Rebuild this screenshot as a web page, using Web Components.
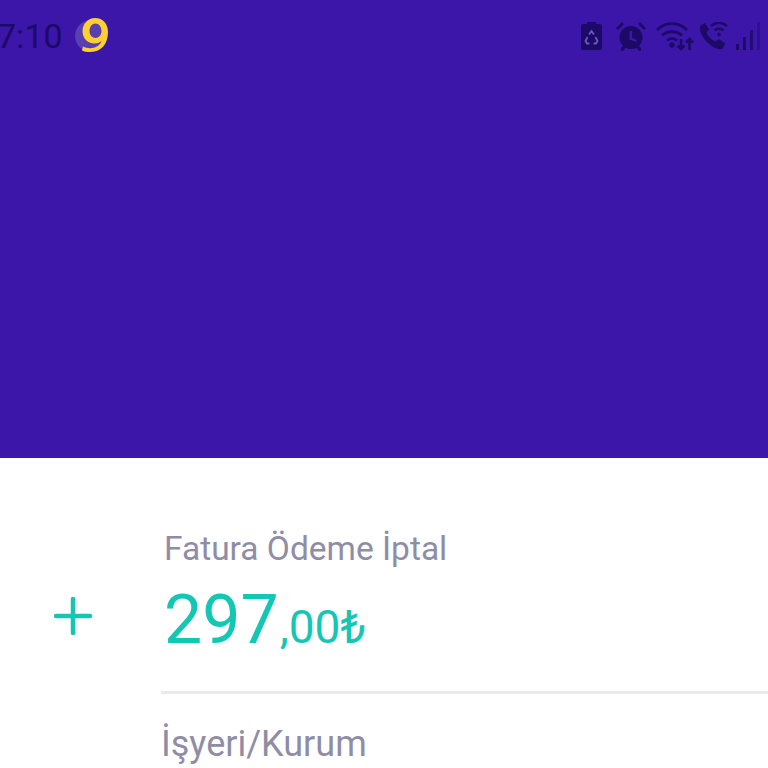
<!DOCTYPE html>
<html lang="tr">
<head>
<meta charset="utf-8">
<title>Fatura Ödeme İptal</title>
<style>
html, body { margin: 0; height: 768px; overflow: hidden; background: #fff; font-family: Roboto, "Liberation Sans", sans-serif; }
</style>
</head>
<body>
<app-screen>
    <status-bar slot="top"></status-bar>
    <amount-row label="Fatura Ödeme İptal" whole="297" cents=",00₺"></amount-row>
    <detail-label>İşyeri/Kurum</detail-label>
</app-screen>

<script>
(function(){
    const screenTemplate = document.createElement("template");
    screenTemplate.innerHTML = `
        <style>
        :host { display: block; height: 768px; overflow: hidden; }
        .hero { height: 458px; background: #3b16a9; }
        .content { padding-top: 71px; }
        </style>
        <div class="hero"><slot name="top"></slot></div>
        <div class="content"><slot></slot></div>
    `;

    class AppScreen extends HTMLElement {
        constructor() {
            super();
            this.attachShadow({mode: "open"}).appendChild(screenTemplate.content.cloneNode(true));
        }
    }

    const statusTemplate = document.createElement("template");
    statusTemplate.innerHTML = `
        <style>
        :host { display: block; height: 72px; color: #1c0a66; }
        .bar { display: flex; align-items: center; justify-content: space-between; height: 72px; }
        .left { display: flex; align-items: center; gap: 12px; margin-left: -3px; }
        .time { font: 400 34px Roboto, sans-serif; }
        .right { display: flex; align-items: center; margin-right: 7px; }
        .battery { margin-right: 14px; }
        .alarm { margin-right: 10px; }
        .wifi { margin-right: 5px; }
        .call { margin-right: 8px; }
        svg { display: block; }
        </style>
        <div class="bar">
            <div class="left">
                <span class="time">7:10</span>
                <svg width="34" height="36" viewBox="0 0 34 36">
                    <circle cx="16" cy="18" r="16" fill="#5a3fb0"/>
                    <path fill="#fdd02f" fill-rule="evenodd" d="M20 0c8 0 13 6 13 14 0 11-6 20-18 20-3 0-6-.5-8-1.500l1-4c3 1.500 6 2 9 1.500 5-.5 8-3 9.500-7-2 1.700-4 2.500-7 2.500-7 0-12-5-12-12.500C7.500 6 13 0 20 0zm.5 5.500c-3.500 0-6 3.500-6 7.500s2.500 7 6 7 6-3 6-7-2.500-7.500-6-7.500z"/>
                </svg>
            </div>
            <div class="right">
                <svg class="battery" width="21" height="28" viewBox="0 0 21 28">
                    <path fill="currentColor" d="M6 0h9v2h4a2 2 0 0 1 2 2v22a2 2 0 0 1-2 2H2a2 2 0 0 1-2-2V4a2 2 0 0 1 2-2h4z"/>
                    <path fill="none" stroke="#6d54c4" stroke-width="1.800" d="M8 12.500l2.500-3.500 2.500 3.500M14.500 15l2 4-1.500 2.500h-2.500M8.500 21.500H6L4.500 19l2-4"/>
                </svg>
                <svg class="alarm" width="30" height="29" viewBox="0 0 30 29" fill="currentColor">
                    <path fill-rule="evenodd" d="M15 4a11.500 11.500 0 1 1 0 23 11.500 11.500 0 0 1 0-23zm-1.500 5v8.500l6.500 2.500 1-2-5-2.200V9z"/>
                    <path d="M0 6l6-6 2 2-6 6zM30 6l-6-6-2 2 6 6z"/>
                    <path d="M5 26l3-3 2 2-3 4H5zM25 26l-3-3-2 2 3 4h2z"/>
                </svg>
                <svg class="wifi" width="38" height="29" viewBox="0 0 38 29" fill="none" stroke="currentColor" stroke-width="2.800">
                    <path d="M1 8c8-8.500 22-8.500 30 0"/>
                    <path d="M6 13.500c5.500-5 14.500-5 20 0"/>
                    <path d="M11 18.500c3-2.500 7-2.500 10 0"/>
                    <circle cx="16" cy="23" r="1.300" fill="currentColor"/>
                    <path d="M25 17v10M21.500 23.500l3.500 3.500 3.500-3.500" stroke-width="2.600"/>
                    <path d="M33.500 28V17M30 20.500l3.500-3.500 3.500 3.500" stroke-width="2.600"/>
                </svg>
                <svg class="call" width="29" height="28" viewBox="0 0 29 28">
                    <path fill="currentColor" d="M6 1l4 6-2.500 3.500c1.500 4 5 7.500 9 9l3.500-2.500 6 4.500-2 5c-1 .8-3 1.200-5 .5C10 24 3 16 1 8c-.5-2 0-4 1-5z"/>
                    <path fill="none" stroke="currentColor" stroke-width="2.500" d="M12 4c5-4 11-4 16 0M15.500 8.500c3-2.300 6-2.300 9 0"/>
                    <circle cx="20" cy="12.500" r="1.800" fill="currentColor"/>
                </svg>
                <svg width="25" height="28" viewBox="0 0 25 28" fill="currentColor">
                    <rect x="0" y="22" width="3" height="6"/>
                    <rect x="7" y="15" width="3" height="13"/>
                    <rect x="14" y="8" width="3" height="20" opacity=".8"/>
                    <rect x="21" y="0" width="3" height="28" opacity=".4"/>
                </svg>
            </div>
        </div>
    `;

    class StatusBar extends HTMLElement {
        constructor() {
            super();
            this.attachShadow({mode: "open"}).appendChild(statusTemplate.content.cloneNode(true));
        }
    }

    const amountTemplate = document.createElement("template");
    amountTemplate.innerHTML = `
        <style>
        :host { display: grid; grid-template-columns: 161px 1fr; align-items: center; font-family: Roboto, sans-serif; }
        .plus { display: flex; justify-content: flex-end; padding-right: 68px; padding-top: 9px; }
        .body { border-bottom: 3px solid #e9e9ee; padding-bottom: 32px; }
        .label { padding-left: 3px; font-size: 33.500px; line-height: 40px; color: #8f8da6; }
        .value { padding-left: 3px; margin-top: 12px; color: #14c7b4; line-height: 78px; height: 78px; white-space: nowrap; }
        .whole { font-size: 68px; }
        .cents { font-size: 46px; margin-left: 1px; }
        svg { display: block; }
        </style>
        <div class="plus">
            <svg width="40" height="40" viewBox="0 0 40 40" fill="none" stroke="#14c7b4" stroke-width="4.500" stroke-linecap="round">
                <path d="M3 20h34M20 3v34"/>
            </svg>
        </div>
        <div class="body">
            <div class="label"></div>
            <div class="value"><span class="whole"></span><span class="cents"></span></div>
        </div>
    `;

    class AmountRow extends HTMLElement {
        constructor() {
            super();
            this._shadowRoot = this.attachShadow({mode: "open"});
            this._shadowRoot.appendChild(amountTemplate.content.cloneNode(true));
            this._shadowRoot.querySelector(".label").textContent = this.getAttribute("label");
            this._shadowRoot.querySelector(".whole").textContent = this.getAttribute("whole");
            this._shadowRoot.querySelector(".cents").textContent = this.getAttribute("cents");
        }
    }

    const labelTemplate = document.createElement("template");
    labelTemplate.innerHTML = `
        <style>
        :host { display: block; padding: 28px 0 0 161px; font: 400 36px/44px Roboto, sans-serif; color: #8f8da6; }
        </style>
        <slot></slot>
    `;

    class DetailLabel extends HTMLElement {
        constructor() {
            super();
            this.attachShadow({mode: "open"}).appendChild(labelTemplate.content.cloneNode(true));
        }
    }

    customElements.define("app-screen", AppScreen);
    customElements.define("status-bar", StatusBar);
    customElements.define("amount-row", AmountRow);
    customElements.define("detail-label", DetailLabel);
})();
</script>
</body>
</html>
